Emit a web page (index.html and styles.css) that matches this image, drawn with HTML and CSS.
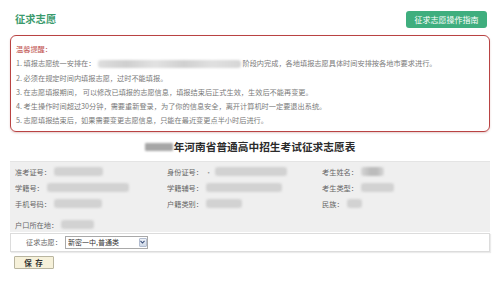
FILE: index.html
```html
<!DOCTYPE html>
<html lang="zh-CN">
<head>
<meta charset="utf-8">
<title>征求志愿</title>
<link rel="stylesheet" href="styles.css">
</head>
<body>
<header class="top">
  <h1 class="page-title">征求志愿</h1>
  <a class="guide-btn" href="#">征求志愿操作指南</a>
</header>

<section class="notice">
  <p class="notice-title">温馨提醒：</p>
  <p class="notice-line">1. 填报志愿统一安排在：<span class="blur blur-long"></span>阶段内完成，各地填报志愿具体时间安排按各地市要求进行。</p>
  <p class="notice-line">2. 必须在规定时间内填报志愿，过时不能填报。</p>
  <p class="notice-line">3. 在志愿填报期间， 可以修改已填报的志愿信息，填报结束后正式生效，生效后不能再变更。</p>
  <p class="notice-line">4. 考生操作时间超过30分钟，需要重新登录，为了你的信息安全，离开计算机时一定要退出系统。</p>
  <p class="notice-line">5. 志愿填报结束后，如果需要变更志愿信息，只能在最近变更点半小时后进行。</p>
</section>

<h2 class="form-title"><span class="blur year"></span>年河南省普通高中招生考试征求志愿表</h2>

<div class="info">
  <div class="cell">准考证号：<span class="blur" style="width:49px"></span></div>
  <div class="cell">身份证号：<span class="dot">·</span><span class="blur" style="width:72px"></span></div>
  <div class="cell">考生姓名：<span class="blur dark" style="width:23px"></span></div>

  <div class="cell">学籍号：<span class="blur" style="width:82px"></span></div>
  <div class="cell">学籍辅号：<span class="blur" style="width:76px"></span></div>
  <div class="cell">考生类型：<span class="blur" style="width:33px"></span></div>

  <div class="cell">手机号码：<span class="blur" style="width:48px"></span></div>
  <div class="cell">户籍类别：<span class="blur" style="width:36px"></span></div>
  <div class="cell">民族：<span class="blur" style="width:15px"></span></div>

  <div class="cell last">户口所在地：<span class="blur" style="width:33px"></span></div>
</div>

<div class="choice-row">
  <label class="choice-label" for="zy">征求志愿：</label>
  <span class="select-wrap">
    <select id="zy" class="select"><option>新密一中,普通类</option></select>
    <span class="select-arrow"><svg width="5" height="4" viewBox="0 0 5 4"><path d="M0.5 0.8 L2.5 3 L4.5 0.8" fill="none" stroke="#3b4f7a" stroke-width="1.1"/></svg></span>
  </span>
</div>

<button class="save" type="button">保 存</button>
</body>
</html>
```

FILE: styles.css
```css
* { box-sizing: border-box; }
html, body { margin: 0; padding: 0; background: #fff; }
body {
  width: 500px;
  font-family: "Noto Sans CJK SC", "Noto Sans", sans-serif;
  color: #666;
}

.top {
  display: flex;
  justify-content: space-between;
  align-items: center;
  height: 18px;
  margin-top: 10px;
  padding: 0 13px 0 15px;
}
.page-title {
  margin: 0;
  font-size: 10.3px;
  line-height: 14px;
  font-weight: 700;
  color: #3a9a6c;
}
.guide-btn {
  display: flex;
  align-items: center;
  justify-content: center;
  width: 81px;
  height: 17px;
  background: #3fae7e;
  color: #fff;
  font-size: 8px;
  text-decoration: none;
  border-radius: 3px;
}

.notice {
  margin: 7px 10px 0;
  padding: 6px 5px 3px;
  border: 1.5px solid #b94343;
  border-radius: 6px;
  box-shadow: 0 1px 2px rgba(150, 60, 60, 0.25);
}
.notice p {
  margin: 0;
  font-size: 7.2px;
  line-height: 14.3px;
  white-space: nowrap;
}
.notice-title { color: #c0504d; }
.notice-line { color: #7a7a7a; }

.blur {
  display: inline-block;
  height: 8px;
  vertical-align: middle;
  background: #d2d2d2;
  border-radius: 3px;
  filter: blur(1.2px);
}
.blur-long {
  width: 143px;
  margin: 0 1px 0 3px;
  background: linear-gradient(90deg, #dedede 0%, #cfcfcf 20%, #e2e2e2 40%, #d0d0d0 60%, #e0e0e0 80%, #d6d6d6 100%);
}
.blur.dark {
  background: linear-gradient(90deg, #d6d6d6 0%, #bcbcbc 40%, #bcbcbc 70%, #d8d8d8 100%);
}

.form-title {
  margin: 8px 0 0;
  text-align: center;
  font-size: 10.7px;
  line-height: 14px;
  font-weight: 700;
  color: #2b2b2b;
}
.year {
  width: 28px;
  height: 8px;
  margin-right: 1px;
  vertical-align: 0;
  background: #a6a6a6;
  border-radius: 1px;
  filter: blur(0.8px);
}

.info {
  display: grid;
  grid-template-columns: 152px 155px 1fr;
  grid-auto-rows: 16px;
  margin: 7px 10px 0;
  padding: 2px 0 0 5px;
  height: 71px;
  background: #efefef;
  border-top: 1px solid #e4e4e4;
}
.cell {
  display: flex;
  align-items: center;
  font-size: 7.2px;
  color: #666;
  white-space: nowrap;
}
.cell .blur { margin-left: 3px; height: 9px; }
.cell .dot { margin-left: 2px; color: #999; }
.cell.last { padding-top: 5px; grid-row-end: span 1; height: 21px; }

.choice-row {
  display: flex;
  align-items: center;
  height: 19px;
  margin: 1px 10px 0;
  padding-left: 15px;
  border: 1px solid #dcdcdc;
  box-shadow: 1px 1px 1px rgba(0, 0, 0, 0.08);
}
.choice-label {
  font-size: 7.2px;
  color: #666;
}
.select-wrap {
  position: relative;
  display: inline-block;
  margin-left: 3px;
}
.select {
  display: block;
  width: 83px;
  height: 13px;
  padding: 0 0 0 2px;
  margin: 0;
  font-family: "Noto Sans CJK SC", sans-serif;
  font-size: 7px;
  line-height: 11px;
  color: #333;
  background: #fff;
  border: 1px solid #a9a9a9;
  border-radius: 0;
  -webkit-appearance: none;
  appearance: none;
}
.select-arrow {
  position: absolute;
  top: 2px;
  right: 1px;
  width: 8px;
  height: 9px;
  display: flex;
  align-items: center;
  justify-content: center;
  background: linear-gradient(#eef2f8, #cfd8e6);
  border: 1px solid #b3bdd0;
  border-radius: 1px;
  pointer-events: none;
}

.save {
  display: block;
  width: 40px;
  height: 13px;
  margin: 4px 0 0 14px;
  padding: 0;
  font-family: "Noto Sans CJK SC", sans-serif;
  font-size: 7.5px;
  font-weight: 700;
  line-height: 11px;
  letter-spacing: 1px;
  color: #333;
  background: #f6f1da;
  border: 1px solid #b9b59f;
  border-radius: 1px;
}
```
